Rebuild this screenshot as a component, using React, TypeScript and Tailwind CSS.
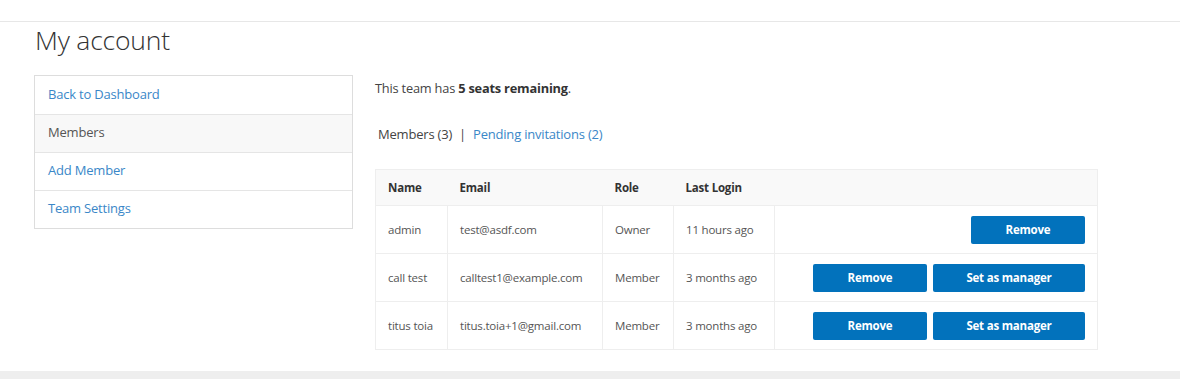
const font = { fontFamily: '"Open Sans", "Noto Sans", sans-serif' }

interface Member {
  name: string
  email: string
  role: string
  lastLogin: string
  canPromote: boolean
}

const members: Member[] = [
  { name: 'admin', email: 'test@asdf.com', role: 'Owner', lastLogin: '11 hours ago', canPromote: false },
  { name: 'call test', email: 'calltest1@example.com', role: 'Member', lastLogin: '3 months ago', canPromote: true },
  { name: 'titus toia', email: 'titus.toia+1@gmail.com', role: 'Member', lastLogin: '3 months ago', canPromote: true },
]

const navItems = [
  { label: 'Back to Dashboard', active: false },
  { label: 'Members', active: true },
  { label: 'Add Member', active: false },
  { label: 'Team Settings', active: false },
]

export default function App() {
  return (
    <div className="w-[1180px] h-[379px] bg-white flex flex-col overflow-hidden tracking-[-0.2px]" style={font}>
      <div className="h-[22px] border-b border-[#e7e7e7] shrink-0" />
      <div className="flex-1 pl-[34px]">
        <h1 className="text-[26.5px] font-light text-[#333] leading-none mt-[5px] ml-[1px]">My account</h1>
        <div className="flex mt-[21px]">
          <ul className="w-[319px] border border-[#ddd] self-start">
            {navItems.map((item, i) => (
              <li
                key={item.label}
                className={`h-[38px] flex items-center px-[13px] text-[13px] ${i > 0 ? 'border-t border-[#e5e5e5]' : ''} ${
                  item.active ? 'bg-[#f8f8f8] text-[#555]' : 'text-[#3a87c8]'
                }`}
              >
                {item.label}
              </li>
            ))}
          </ul>
          <div className="ml-[22px] w-[723px]">
            <p className="text-[12.8px] text-[#444] mt-[4px]">
              This team has <b className="font-bold text-[#333]">5 seats remaining</b>.
            </p>
            <div className="text-[13px] mt-[27px] ml-[3px] flex gap-[7px]">
              <span className="text-[#444]">Members (3)</span>
              <span className="text-[#444]">|</span>
              <span className="text-[#3a87c8]">Pending invitations (2)</span>
            </div>
            <table className="mt-[25px] w-full border border-[#eee] text-[11.5px] border-collapse">
              <thead>
                <tr className="bg-[#f9f9f9] h-[36px] text-left text-[#333]">
                  <th className="font-bold pl-[12px] w-[72px]">Name</th>
                  <th className="font-bold pl-[12px] w-[155px]">Email</th>
                  <th className="font-bold pl-[12px] w-[71px]">Role</th>
                  <th className="font-bold pl-[12px] w-[101px]">Last Login</th>
                  <th />
                </tr>
              </thead>
              <tbody>
                {members.map((m) => (
                  <tr key={m.email} className="h-[48px] border-t border-[#eee] text-[#555]">
                    <td className="pl-[12px] border-r border-[#eee]">{m.name}</td>
                    <td className="pl-[12px] border-r border-[#eee]">{m.email}</td>
                    <td className="pl-[12px] border-r border-[#eee]">{m.role}</td>
                    <td className="pl-[12px] border-r border-[#eee]">{m.lastLogin}</td>
                    <td className="pr-[12px]">
                      <div className="flex justify-end gap-[6px]">
                        <button className="w-[114px] h-[28px] bg-[#0272bc] rounded-[2px] text-white font-bold text-[11.5px]">
                          Remove
                        </button>
                        {m.canPromote && (
                          <button className="w-[152px] h-[28px] bg-[#0272bc] rounded-[2px] text-white font-bold text-[11.5px]">
                            Set as manager
                          </button>
                        )}
                      </div>
                    </td>
                  </tr>
                ))}
              </tbody>
            </table>
          </div>
        </div>
      </div>
      <div className="h-[8px] bg-[#eee] shrink-0" />
    </div>
  )
}
